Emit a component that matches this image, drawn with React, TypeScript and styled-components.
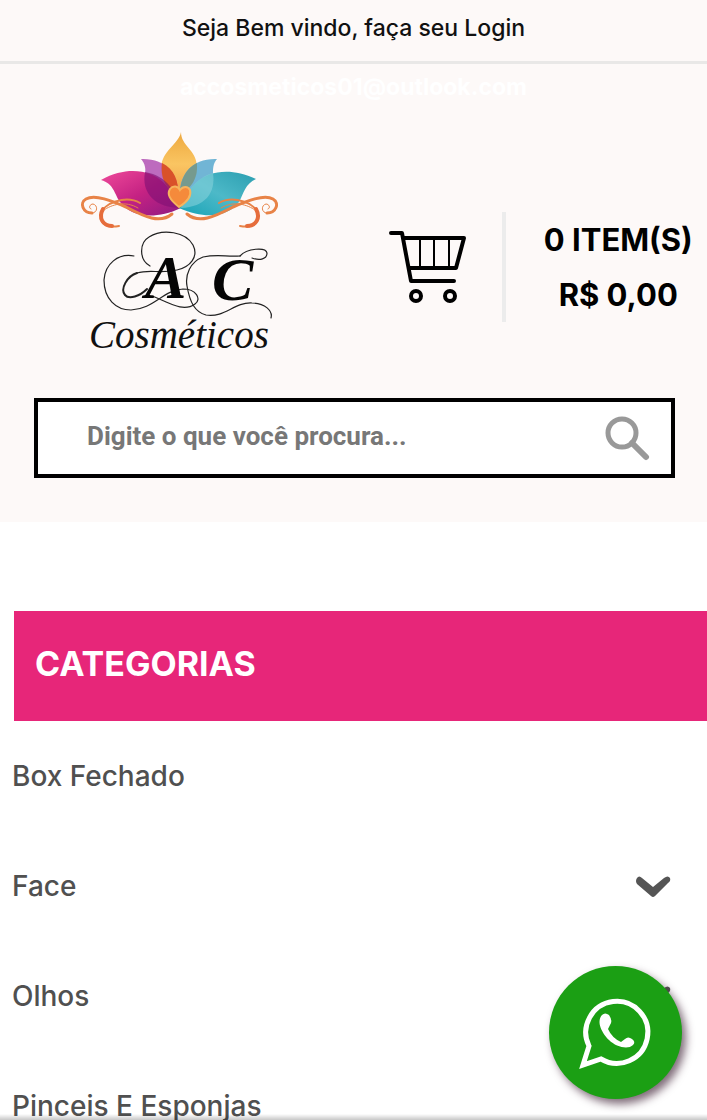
import React from 'react';
import styled, { createGlobalStyle } from 'styled-components';

const GlobalStyle = createGlobalStyle`
  * { box-sizing: border-box; }
  body {
    margin: 0;
    background: #fff;
    color: #000;
    font-family: Inter, "Open Sans", sans-serif;
  }
  a { color: inherit; text-decoration: none; }
`;

const Page = styled.div`
  height: 100vh;
  overflow-x: hidden;
  overflow-y: auto;
  scrollbar-width: none;
`;

const Header = styled.header`
  background: #fdf9f8;
  padding-bottom: 44px;
`;

const TopBar = styled.div`
  display: flex;
  justify-content: center;
  height: 64px;
  padding-top: 12px;
  border-bottom: 3px solid #e9e8e7;
  font-size: 23px;
  line-height: 32px;
  font-weight: 500;
  color: #111;
`;

const MailLine = styled.div`
  display: flex;
  justify-content: center;
  height: 48px;
  padding-top: 7px;
  font-size: 23px;
  line-height: 32px;
  font-weight: 700;
  color: #fff;
`;

const Brand = styled.div`
  display: grid;
  grid-template-columns: 1fr 1fr;
  height: 286px;
  padding-top: 16px;
`;

const LogoLink = styled.a`
  display: flex;
  justify-content: center;
  svg { display: block; }
`;

const Cart = styled.a`
  display: flex;
  align-items: center;
  height: 110px;
  margin-top: 84px;
  padding-left: 34px;
  svg { flex: none; }
`;

const CartTotals = styled.div`
  display: flex;
  flex: 1;
  flex-direction: column;
  align-items: center;
  margin-left: 34px;
  padding-left: 24px;
  border-left: 4px solid #ececec;
  font-size: 31px;
  line-height: 55px;
  font-weight: 700;
  white-space: nowrap;
`;

const SearchForm = styled.form`
  display: flex;
  align-items: center;
  height: 80px;
  margin: 0 32px 0 34px;
  padding-right: 21px;
  border: 4px solid #000;
  background: #fff;
`;

const SearchInput = styled.input`
  flex: 1;
  min-width: 0;
  height: 100%;
  padding: 0 0 4px 49px;
  border: 0;
  outline: 0;
  background: transparent;
  font: 700 26px/32px Roboto, sans-serif;
  &::placeholder { color: #777; opacity: 1; }
`;

const SearchButton = styled.button`
  padding: 0;
  border: 0;
  background: transparent;
  svg { display: block; }
`;

const CategoriesTitle = styled.h2`
  margin: 89px 0 0 14px;
  height: 110px;
  padding-left: 21px;
  background: #e72679;
  color: #fff;
  font-size: 34px;
  line-height: 106px;
  font-weight: 700;
`;

const CategoryList = styled.ul`
  margin: 0;
  padding: 0;
  list-style: none;
`;

const CategoryRow = styled.li`
  display: flex;
  align-items: center;
  justify-content: space-between;
  height: 110px;
  padding: 0 36px 0 12px;
  color: #505050;
  font-size: 28px;
  line-height: 36px;
  font-weight: 500;
`;

const ExpandButton = styled.button`
  padding: 2px 0 0;
  border: 0;
  background: transparent;
  svg { display: block; }
`;

const WhatsAppButton = styled.a`
  position: fixed;
  right: 25px;
  bottom: 21px;
  display: flex;
  align-items: center;
  justify-content: center;
  width: 133px;
  height: 133px;
  border-radius: 50%;
  background: #1b9f14;
  box-shadow: 4px 5px 8px rgba(60, 30, 50, 0.65);
`;

const BottomShade = styled.div`
  position: fixed;
  inset: auto 0 0 0;
  height: 6px;
  background: linear-gradient(rgba(0, 0, 0, 0), rgba(0, 0, 0, 0.22));
`;

function Logo() {
  return (
    <svg width="210" height="250" viewBox="72 128 210 250" role="img" aria-label="AC Cosméticos">
      <defs>
        <linearGradient id="pink" x1="0" y1="0" x2="1" y2="1">
          <stop offset="0" stopColor="#ef4a9a" />
          <stop offset=".5" stopColor="#c52283" />
          <stop offset="1" stopColor="#8d1a82" />
        </linearGradient>
        <linearGradient id="teal" x1="1" y1="0" x2="0" y2="1">
          <stop offset="0" stopColor="#2b9eb0" />
          <stop offset=".5" stopColor="#4db9c8" />
          <stop offset="1" stopColor="#17a3b6" />
        </linearGradient>
        <linearGradient id="gold" x1="0" y1="0" x2="0" y2="1">
          <stop offset="0" stopColor="#eda83e" />
          <stop offset=".5" stopColor="#fac562" />
          <stop offset="1" stopColor="#f0a04a" />
        </linearGradient>
      </defs>
      <path d="M181 132C179 144 161 151 161 169C161 181 168 188 179 196C190 188 198 180 197 166C196 149 181 146 181 132Z" fill="url(#gold)" />
      <path d="M141 159C165 158 180 174 178 196L174 201C150 199 143 188 145 174C146 168 145 164 141 159Z" fill="#b65bb7" opacity=".9" />
      <path d="M217 159C193 158 178 174 180 198C205 203 215 189 213 174C213 168 213 164 217 159Z" fill="#58a9cf" opacity=".85" />
      <path d="M162 163C174 169 179 181 178 195C168 190 160 181 162 163Z" fill="#d9512a" />
      <path d="M197 163C185 169 180 181 180 195C191 188 198 179 197 163Z" fill="#769a8e" />
      <path d="M101 180C128 165 151 171 163 182C173 191 175 203 181 208C153 221 130 216 120 202C114 193 114 184 101 180Z" fill="url(#pink)" />
      <path d="M145 172C168 176 176 193 181 208C156 208 141 194 145 172Z" fill="#831174" opacity=".65" />
      <path d="M256 179C231 167 209 171 197 182C187 191 184 203 179 208C208 221 230 215 239 202C244 193 245 184 256 179Z" fill="url(#teal)" />
      <path d="M213 173C195 178 186 193 181 208C205 207 216 193 213 173Z" fill="#8bd3dc" opacity=".55" />
      <path d="M179 207C169 199 167 194 170 189C173 185 178 186 180 190C183 186 188 186 190 190C192 197 187 202 179 207Z" fill="#f58a3b" stroke="#f6b45e" strokeWidth="2" />
      <g fill="none" stroke="#e88347" strokeLinecap="round">
        <path d="M92 213C83 213 79 203 86 199C95 194 112 201 126 207C145 217 160 224 172 214" strokeWidth="3" />
        <path d="M92 213C98 213 98 205 93 204C90 204 88 208 91 209" strokeWidth="1" />
        <path d="M140 203C126 195 102 203 101 215C100 225 109 228 119 226" strokeWidth="2" />
        <path d="M103 209C98 218 103 226 112 226" stroke="#e66d3c" strokeWidth="4" />
        <path d="M138 208C125 200 111 205 104 210" strokeWidth="1" />
        <path d="M267 213C276 213 280 203 273 199C264 194 247 201 233 207C214 217 199 224 187 214" strokeWidth="3" />
        <path d="M267 213C261 213 261 205 266 204C269 204 271 208 268 209" strokeWidth="1" />
        <path d="M219 203C233 195 257 203 258 215C259 225 250 228 240 226" strokeWidth="2" />
        <path d="M256 209C261 218 256 226 247 226" stroke="#e66d3c" strokeWidth="4" />
        <path d="M221 208C234 200 248 205 255 210" strokeWidth="1" />
      </g>
      <g fill="none" stroke="#222" strokeWidth="1.2" strokeLinecap="round">
        <path d="M150 266C139 260 139 243 149 237C163 228 186 232 193 245C199 257 190 267 177 270C160 274 150 269 137 273" />
        <path d="M137 273C127 276 120 289 125 295C129 300 140 296 147 289" strokeWidth="2" />
        <path d="M134 256C118 253 105 264 104 280C104 299 116 310 131 310C154 309 163 290 183 289C196 289 202 299 195 304C183 313 168 302 152 296" />
        <path d="M240 256C226 257 218 254 203 257C190 262 185 275 187 286C190 303 195 312 206 315C225 318 234 302 252 303C265 303 273 311 271 318" />
        <path d="M240 256C247 248 266 247 267 253C267 259 260 261 252 258" />
      </g>
      <g fill="#050505" fontFamily="Liberation Serif, serif" fontStyle="italic" fontWeight="700">
        <text x="145" y="298" fontSize="62">A</text>
        <text x="212" y="300" fontSize="62">C</text>
      </g>
      <text x="89" y="348" fill="#111" fontFamily="Liberation Serif, serif" fontStyle="italic" fontSize="39">Cosméticos</text>
    </svg>
  );
}

function CartIcon() {
  return (
    <svg width="80" height="76" viewBox="0 0 80 76" fill="none" stroke="#000" aria-hidden="true">
      <path d="M3 4H14L23 52H66M16 9H76L68 39H21" strokeWidth="4" strokeLinecap="round" strokeLinejoin="round" />
      <path d="M32 10V38M46 10V38M61 10V38" strokeWidth="2" />
      <circle cx="28" cy="67" r="5" strokeWidth="4" />
      <circle cx="62" cy="67" r="5" strokeWidth="4" />
    </svg>
  );
}

function SearchIcon() {
  return (
    <svg width="46" height="46" viewBox="0 0 46 46" fill="none" stroke="#999" aria-hidden="true">
      <circle cx="18" cy="18" r="14" strokeWidth="5" />
      <path d="M28 28L42 42" strokeWidth="6" strokeLinecap="round" />
    </svg>
  );
}

function ChevronIcon() {
  return (
    <svg width="36" height="24" viewBox="0 0 36 24" aria-hidden="true">
      <path d="M2 3Q4 0 7 3L18 12L29 3Q33 0 35 3Q36 6 33 8L20 21Q18 23 16 21L2 9Q0 6 2 3Z" fill="#555" />
    </svg>
  );
}

function WhatsAppIcon() {
  return (
    <svg width="76" height="76" viewBox="-1 0 76 76" aria-hidden="true">
      <path d="M4 70L10 51A31 31 0 1 1 22 64Z" fill="none" stroke="#fff" strokeWidth="5" strokeLinejoin="miter" />
      <path d="M23 20Q26 17 30 20Q34 26 31 30L29 34Q33 43 42 47L46 44Q49 41 53 44Q57 47 54 50C49 55 37 52 30 45C23 38 17 27 23 20Z" fill="#fff" />
    </svg>
  );
}

const categories = [
  { name: 'Box Fechado', expandable: false },
  { name: 'Face', expandable: true },
  { name: 'Olhos', expandable: true },
  { name: 'Pinceis E Esponjas', expandable: false },
];

export default function App() {
  return (
    <Page>
      <GlobalStyle />
      <Header>
        <TopBar><a href="#login">Seja Bem vindo, faça seu Login</a></TopBar>
        <MailLine><a href="#contato">accosmeticos01@outlook.com</a></MailLine>
        <Brand>
          <LogoLink href="#inicio"><Logo /></LogoLink>
          <Cart href="#carrinho">
            <CartIcon />
            <CartTotals>
              <span>0 ITEM(S)</span>
              <span>R$ 0,00</span>
            </CartTotals>
          </Cart>
        </Brand>
        <SearchForm role="search" onSubmit={(e) => e.preventDefault()}>
          <SearchInput type="text" aria-label="Buscar produtos" placeholder="Digite o que você procura..." />
          <SearchButton type="submit" aria-label="Buscar"><SearchIcon /></SearchButton>
        </SearchForm>
      </Header>
      <nav aria-label="Categorias">
        <CategoriesTitle>CATEGORIAS</CategoriesTitle>
        <CategoryList>
          {categories.map((c) => (
            <CategoryRow key={c.name}>
              <a href="#categoria">{c.name}</a>
              {c.expandable && <ExpandButton type="button" aria-label={`Expandir ${c.name}`}><ChevronIcon /></ExpandButton>}
            </CategoryRow>
          ))}
        </CategoryList>
      </nav>
      <WhatsAppButton href="#whatsapp" aria-label="WhatsApp"><WhatsAppIcon /></WhatsAppButton>
      <BottomShade />
    </Page>
  );
}
